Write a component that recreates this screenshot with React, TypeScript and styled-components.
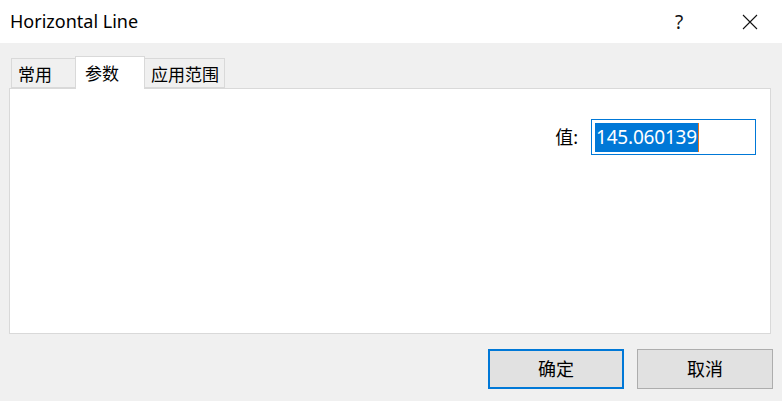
import React, { FC } from "react";
import styled, { createGlobalStyle } from "styled-components";

const GlobalStyle = createGlobalStyle`
  html, body {
    margin: 0;
    padding: 0;
    background: #f0f0f0;
  }
  body {
    font-family: "Noto Sans", "Noto Sans CJK SC", sans-serif;
    font-size: 18px;
    color: #000;
  }
`;

const Window = styled.div`
  width: 782px;
  height: 401px;
  display: flex;
  flex-direction: column;
  background: #f0f0f0;
  overflow: hidden;
`;

const TitleBar = styled.div`
  height: 43px;
  background: #fff;
  display: flex;
  align-items: center;
  padding-left: 10px;
  box-sizing: border-box;
`;

const Title = styled.div`
  flex: 1;
  font-size: 18px;
  line-height: 1;
  margin-top: -2px;
`;

const TitleButton = styled.div<{ $shift?: number }>`
  width: 64px;
  height: 43px;
  display: flex;
  align-items: center;
  justify-content: center;
  padding-right: ${(p) => p.$shift ?? 0}px;
  box-sizing: border-box;
  font-size: 19px;
  color: #111;
`;

const Body = styled.div`
  flex: 1;
  display: flex;
  flex-direction: column;
  padding: 13px 11px 0 9px;
`;

const TabStrip = styled.div`
  display: flex;
  align-items: flex-end;
  padding-left: 2px;
  height: 32px;
  position: relative;
  z-index: 1;
`;

const Tab = styled.div<{ $active?: boolean; $w: number }>`
  box-sizing: border-box;
  width: ${(p) => p.$w}px;
  height: ${(p) => (p.$active ? 33 : 30)}px;
  margin-bottom: ${(p) => (p.$active ? -1 : 0)}px;
  background: ${(p) => (p.$active ? "#fff" : "#f0f0f0")};
  border: 1px solid #d9d9d9;
  border-bottom: ${(p) => (p.$active ? "none" : "1px solid #d9d9d9")};
  display: flex;
  align-items: center;
  padding-left: ${(p) => (p.$active ? 9 : 6)}px;
  padding-top: ${(p) => (p.$active ? 0 : 2)}px;
  font-size: 17px;
  line-height: 1;
  & + & {
    margin-left: -1px;
  }
`;

const Panel = styled.div`
  box-sizing: border-box;
  height: 246px;
  background: #fff;
  border: 1px solid #d9d9d9;
  display: flex;
  flex-direction: column;
  padding: 30px 14px 0 0;
`;

const FieldRow = styled.div`
  display: flex;
  justify-content: flex-end;
  align-items: center;
  gap: 13px;
`;

const Label = styled.div`
  font-size: 18px;
  line-height: 1;
`;

const ValueBox = styled.div`
  box-sizing: border-box;
  width: 165px;
  height: 36px;
  border: 1px solid #0078d7;
  display: flex;
  align-items: center;
  padding-left: 3px;
`;

const Selected = styled.span`
  background: #0078d7;
  color: #fff;
  font-size: 19px;
  line-height: 29px;
  height: 29px;
  padding: 0 1px;
  border-right: 1px solid #e8731c;
  letter-spacing: -0.2px;
`;

const Footer = styled.div`
  display: flex;
  justify-content: flex-end;
  gap: 13px;
  padding-top: 15px;
  margin-right: -2px;
`;

const Button = styled.div<{ $primary?: boolean }>`
  box-sizing: border-box;
  width: 136px;
  height: 40px;
  background: #e1e1e1;
  border: ${(p) => (p.$primary ? "2px solid #0078d7" : "1px solid #adadad")};
  display: flex;
  align-items: center;
  justify-content: center;
  font-size: 18px;
  line-height: 1;
`;

const CloseIcon: FC = () => (
  <svg width="16" height="16" viewBox="0 0 16 16">
    <path d="M1 1 L15 15 M15 1 L1 15" stroke="#111" strokeWidth="1.1" fill="none" />
  </svg>
);

const App: FC = () => (
  <Window>
    <GlobalStyle />
    <TitleBar>
      <Title>Horizontal Line</Title>
      <TitleButton $shift={14}>?</TitleButton>
      <TitleButton>
        <CloseIcon />
      </TitleButton>
    </TitleBar>
    <Body>
      <TabStrip>
        <Tab $w={65}>常用</Tab>
        <Tab $w={70} $active>
          参数
        </Tab>
        <Tab $w={81}>应用范围</Tab>
      </TabStrip>
      <Panel>
        <FieldRow>
          <Label>值:</Label>
          <ValueBox>
            <Selected>145.060139</Selected>
          </ValueBox>
        </FieldRow>
      </Panel>
      <Footer>
        <Button $primary>确定</Button>
        <Button>取消</Button>
      </Footer>
    </Body>
  </Window>
);

export default App;
